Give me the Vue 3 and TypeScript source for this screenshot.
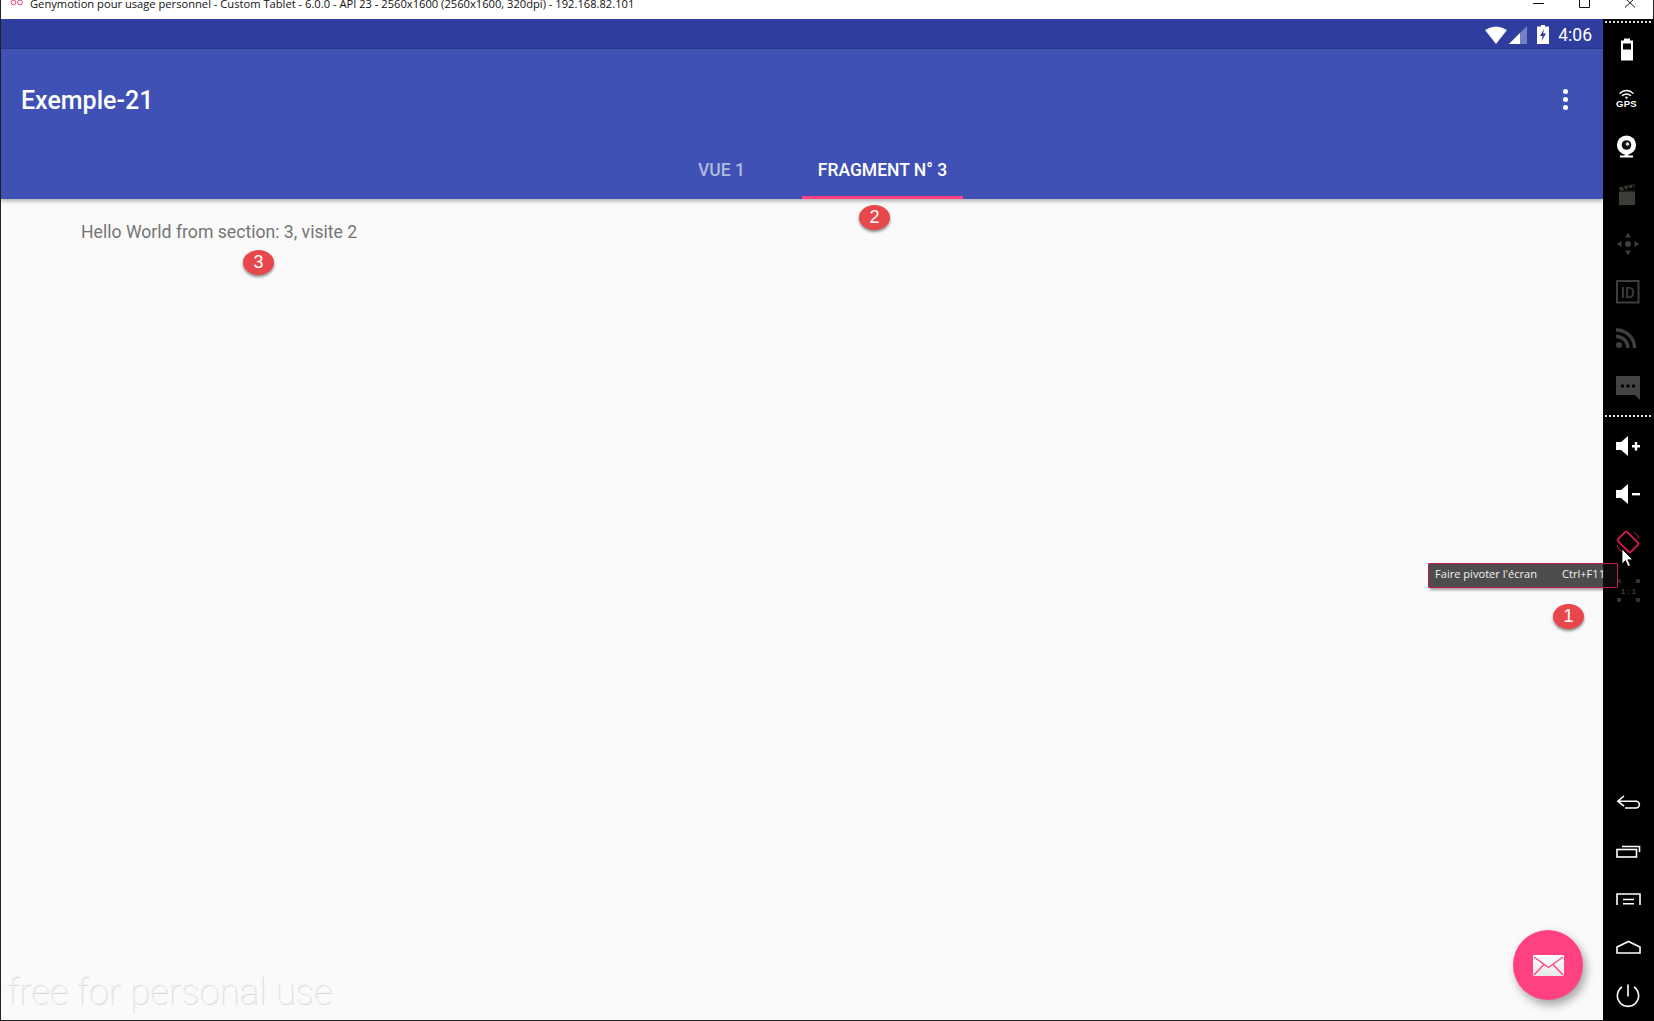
<script setup lang="ts">
interface Tab { label: string; active: boolean }
const tabs: Tab[] = [
  { label: 'VUE 1', active: false },
  { label: 'FRAGMENT N° 3', active: true },
]
</script>

<template>
  <div class="screen">
    <header class="titlebar">
      <svg class="logo" width="14" height="8" viewBox="0 0 14 8"><circle cx="3.5" cy="2.5" r="2.4" /><circle cx="10" cy="2.5" r="2.4" /></svg>
      <span class="window-title">Genymotion pour usage personnel - Custom Tablet - 6.0.0 - API 23 - 2560x1600 (2560x1600, 320dpi) - 192.168.82.101</span>
      <div class="window-buttons">
        <svg width="104" height="19" viewBox="0 0 104 19">
          <path d="M0 3.5H11" />
          <path d="M46.5 -2V7.5H56.5V-2" />
          <path d="M92 -2L102 7.5M102 -2L92 7.5" />
        </svg>
      </div>
    </header>

    <div class="body">
      <main class="device">
        <div class="statusbar">
          <svg width="22" height="18" viewBox="0 0 22 18"><path d="M0 4Q11 -3 22 4L11 18Z" fill="#fff" /></svg>
          <svg class="signal" width="18" height="18" viewBox="0 0 18 18"><path d="M0 18L18 0V18Z" fill="#fff" fill-opacity=".35" /><path d="M0 18L11 7V18Z" fill="#fff" /></svg>
          <svg class="battery" width="12" height="19" viewBox="0 0 12 19"><path d="M4 0H8V1.5H12V19H0V1.5H4Z" fill="#fff" /><path d="M7 4L3 11H5.6L4.6 16L9 8.6H6.2Z" fill="#2f3d9e" /></svg>
          <span class="clock">4:06</span>
        </div>
        <div class="appbar">
          <div class="toolbar">
            <h1 class="app-title">Exemple-21</h1>
            <div class="overflow"><i></i><i></i><i></i></div>
          </div>
          <nav class="tabs">
            <div v-for="tab in tabs" :key="tab.label" class="tab" :class="{ active: tab.active }">{{ tab.label }}</div>
          </nav>
        </div>
        <section class="content">
          <p class="hello">Hello World from section: 3, visite 2</p>
        </section>
      </main>

      <aside class="sidebar">
        <div class="dots first"></div>
        <svg class="slot" viewBox="0 1.5 48 48"><path d="M20 14H26V16H29V36H17V16H20Z" fill="#fff" /><rect x="19" y="19" width="8" height="6" fill="#000" /></svg>
        <svg class="slot" viewBox="0 1 48 48">
          <g fill="none" stroke="#fff" stroke-width="1.4"><path d="M15.5 20.5Q22.5 14.5 29.5 20.5" /><path d="M18 22.8Q22.5 19 27 22.8" /></g>
          <circle cx="22.5" cy="24.6" r="1.2" fill="#fff" />
          <text x="22.5" y="33.5" class="gps">GPS</text>
        </svg>
        <svg class="slot" viewBox="0 1 48 48">
          <circle cx="22.5" cy="24" r="9.6" fill="#fff" /><circle cx="22.5" cy="24" r="4.8" fill="#111" /><circle cx="23.5" cy="23" r="1.8" fill="#ddd" />
          <path d="M20.5 33H24.5V34.5H29V36.4H16V34.5H20.5Z" fill="#fff" />
        </svg>
        <svg class="slot" viewBox="0 0 48 48">
          <rect x="15" y="22" width="16" height="13" fill="#3d3d38" />
          <path d="M15 17.5L30 14L31 17L16 20.5Z" fill="#3d3d38" />
          <path d="M19 16.6L21 19.5M23.5 15.6L25.5 18.5M28 14.6L30 17.5" stroke="#000" stroke-width="1.3" />
          <rect x="15" y="20.5" width="16" height="1.2" fill="#2a2a26" />
        </svg>
        <svg class="slot" viewBox="0 0 48 48" fill="#3f3f3f">
          <circle cx="24" cy="26" r="3" />
          <path d="M24 15L27 19.5H21ZM24 37L21 32.5H27ZM13 26L17.5 23V29ZM35 26L30.5 29V23Z" />
        </svg>
        <svg class="slot" viewBox="0 0 48 48">
          <rect x="13" y="15" width="21.5" height="21.5" fill="none" stroke="#3e3e3e" stroke-width="2" />
          <text x="23.8" y="31.5" class="id">ID</text>
        </svg>
        <svg class="slot" viewBox="0 0 48 48" fill="none" stroke="#3f3f3f" stroke-width="3.4">
          <path d="M12 16A18 18 0 0 1 30.5 34" /><path d="M12 22.5A11.5 11.5 0 0 1 24 34" />
          <circle cx="15" cy="31" r="3" fill="#3f3f3f" stroke="none" />
        </svg>
        <svg class="slot" viewBox="0 0 48 48">
          <path d="M12 14H36V38L31 33H12Z" fill="#444" />
          <circle cx="18.5" cy="24" r="1.7" fill="#000" /><circle cx="24" cy="24" r="1.7" fill="#000" /><circle cx="29.5" cy="24" r="1.7" fill="#000" />
        </svg>
        <div class="dots"></div>
        <svg class="slot" viewBox="0 0 48 48" fill="#fff">
          <path d="M12 20H17L24 14V34L17 28H12Z" /><path d="M28 23H36V25.4H28ZM30.8 20H33.2V28.4H30.8Z" />
        </svg>
        <svg class="slot" viewBox="0 0 48 48" fill="#fff">
          <path d="M12 20H17L24 14V34L17 28H12Z" /><path d="M28 23H36V25.4H28Z" />
        </svg>
        <svg class="slot" viewBox="0 0 48 48" fill="none" stroke="#e3185c">
          <path d="M30 14A11.6 11.6 0 0 1 35 20.5M18 34A11.6 11.6 0 0 1 13 27.5" stroke-width=".9" />
          <rect x="17.5" y="15" width="13" height="18" rx="1.5" stroke-width="1.7" transform="rotate(-45 24 24)" />
        </svg>
        <svg class="slot" viewBox="0 0 48 48" fill="none" stroke="#3f3f3f" stroke-width="1.5">
          <path d="M14 14L17 17M14 17V14H17M35 14L32 17M35 17V14H32M14 35L17 32M14 32V35H17M35 35L32 32M35 32V35H32" />
          <text x="24.5" y="27.5" class="one">1 : 1</text>
        </svg>
        <div class="spacer"></div>
        <svg class="slot" viewBox="0 0 48 48" fill="none" stroke="#fff" stroke-width="1.6">
          <path d="M20 17L13.8 22.2L20 27.2M14 22.2H32A3.4 3.4 0 0 1 32 29H21" />
        </svg>
        <svg class="slot" viewBox="0 0 48 48" fill="none" stroke="#fff" stroke-width="1.6">
          <rect x="13" y="22.5" width="19.5" height="7.5" /><path d="M18 19.5H35.5V25" />
        </svg>
        <svg class="slot" viewBox="0 0 48 48" fill="none" stroke="#fff" stroke-width="1.6">
          <path d="M13 30V19H36V30M19 24.5H30M19 28.8H30" />
        </svg>
        <svg class="slot" viewBox="0 0 48 48" fill="none" stroke="#fff" stroke-width="1.6">
          <path d="M13 24L24.5 18.5L36 24V30H13Z" />
        </svg>
        <svg class="slot" viewBox="0 0 48 48" fill="none" stroke="#fff" stroke-width="1.6">
          <path d="M24 13.5V25.5M18 16A10.6 10.6 0 1 0 30 16" />
        </svg>
      </aside>
    </div>

    <div class="badge badge-one">1</div>
    <div class="badge badge-two">2</div>
    <div class="badge badge-three">3</div>

    <div class="tooltip"><span>Faire pivoter l'écran</span><span>Ctrl+F11</span></div>
    <svg class="cursor" width="13" height="20" viewBox="0 0 13 20"><path d="M1 1V16L4.4 12.6L7 18.5L9.4 17.4L6.9 11.8H11.8Z" fill="#fff" stroke="#000" stroke-width=".8" /></svg>

    <button class="fab" type="button" aria-label="mail">
      <svg width="31" height="21" viewBox="0 0 31 21">
        <defs><linearGradient id="mail" x1="0" y1="0" x2="0" y2="1"><stop offset="0" stop-color="#fff" /><stop offset="1" stop-color="#e8e8e8" /></linearGradient></defs>
        <rect width="31" height="21" rx="1" fill="url(#mail)" />
        <path d="M1 2L15.5 12.5L30 2M1 20L11 9.5M30 20L20 9.5" fill="none" stroke="#ff4081" stroke-width="1.3" />
      </svg>
    </button>

    <div class="watermark">free for personal use</div>
  </div>
</template>

<style>
html, body { margin: 0; background: #000; overflow: hidden; }
</style>

<style scoped>
.screen {
  position: relative;
  width: 1654px;
  height: 1021px;
  display: flex;
  flex-direction: column;
  overflow: hidden;
  background: #fff;
  font-family: Roboto, sans-serif;
}
.titlebar {
  flex: 0 0 19px;
  display: flex;
  align-items: flex-start;
  background: #fff;
  border-left: 1px solid #222;
  border-right: 1px solid #222;
  overflow: hidden;
  position: relative;
}
.logo { margin: 0 0 0 9px; fill: none; stroke: #e8447a; stroke-width: 1; }
.window-title {
  margin: -4px 0 0 6px;
  font: 11.17px/16px "Open Sans", sans-serif;
  color: #111;
  white-space: nowrap;
}
.window-buttons { margin-left: auto; margin-right: 16px; height: 19px; }
.window-buttons svg { display: block; fill: none; stroke: #111; stroke-width: 1; }
.body { flex: 1; display: flex; min-height: 0; }
.device {
  flex: 1;
  display: flex;
  flex-direction: column;
  min-width: 0;
  border-left: 1px solid #222;
  border-bottom: 1px solid #222;
}
.statusbar {
  flex: 0 0 30px;
  box-sizing: border-box;
  display: flex;
  align-items: center;
  justify-content: flex-end;
  padding: 1px 11px 0 0;
  background: #2f3d9e;
  box-shadow: inset 0 -1px 0 rgba(0, 0, 0, .08);
}
.signal { margin-left: 2px; }
.battery { margin-left: 10px; }
.clock { margin: 1px 0 0 9px; color: #fff; font-size: 17.5px; line-height: 24px; }
.appbar {
  flex: 0 0 150px;
  display: flex;
  flex-direction: column;
  background: #3f51b5;
  box-shadow: 0 2px 4px rgba(0, 0, 0, .32);
  position: relative;
}
.toolbar {
  flex: 0 0 103px;
  box-sizing: border-box;
  display: flex;
  align-items: center;
  justify-content: space-between;
  padding: 0 35px 0 20px;
}
.app-title { margin: 0; color: #fff; font-size: 25px; font-weight: 500; }
.overflow { display: flex; flex-direction: column; gap: 3px; margin-top: -3px; }
.overflow i { display: block; width: 5px; height: 5px; border-radius: 50%; background: #fff; }
.tabs { flex: 1; display: flex; justify-content: center; }
.tab {
  width: 161px;
  box-sizing: border-box;
  padding-top: 7px;
  text-align: center;
  font-size: 17.5px;
  line-height: 22px;
  font-weight: 500;
  color: rgba(255, 255, 255, .6);
  white-space: nowrap;
}
.tab.active { color: #fff; border-bottom: 3px solid #ff4081; }
.content { flex: 1; background: #fafafa; }
.hello {
  margin: 0;
  padding: 21px 0 0 80px;
  font-size: 17.64px;
  line-height: 24px;
  color: #757575;
}
.sidebar {
  flex: 0 0 51px;
  display: flex;
  flex-direction: column;
  background: #000;
  box-sizing: border-box;
  padding: 2px 0 2px 0;
}
.slot { display: block; flex: 0 0 48px; width: 48px; height: 48px; margin-left: 1px; }
.dots {
  flex: 0 0 2px;
  margin: 5px 2px;
  background: repeating-linear-gradient(90deg, #ddd 0 2px, transparent 2px 4px);
}
.dots.first { margin: 0 2px 3px; }
.spacer { flex: 1; }
.gps { font: 700 9.5px "Liberation Sans", sans-serif; fill: #fff; text-anchor: middle; letter-spacing: .3px; }
.id { font: 500 15px Roboto, sans-serif; fill: #3e3e3e; text-anchor: middle; }
.one { font: 700 7.5px "Liberation Sans", sans-serif; fill: #3f3f3f; stroke: none; text-anchor: middle; }

.badge {
  position: absolute;
  width: 31px;
  height: 25px;
  border-radius: 50%;
  background: #e8474c;
  box-shadow: 0 2px 3px rgba(0, 0, 0, .45);
  color: #fff;
  font: 18px/25px "Liberation Sans", sans-serif;
  text-align: center;
}
.badge-one { left: 1553px; top: 604px; }
.badge-two { left: 859px; top: 205px; }
.badge-three { left: 243px; top: 250px; }

.tooltip {
  position: absolute;
  left: 1428px;
  top: 563px;
  width: 190px;
  height: 25px;
  box-sizing: border-box;
  display: flex;
  justify-content: space-between;
  align-items: center;
  padding: 0 12px 5px 6px;
  border: 1px solid #c2185b;
  border-radius: 1px;
  background: linear-gradient(90deg, #4d4d4d 0 174px, #0c0c0c 174px);
  box-shadow: 2px 2px 3px rgba(0, 0, 0, .4);
  color: #f2f2f2;
  font: 11.1px "Open Sans", sans-serif;
  white-space: nowrap;
}
.cursor { position: absolute; left: 1621px; top: 548px; }
.fab {
  position: absolute;
  left: 1513px;
  top: 930px;
  width: 70px;
  height: 70px;
  padding: 0;
  border: 0;
  border-radius: 50%;
  background: #ff4081;
  box-shadow: 3px 5px 10px rgba(0, 0, 0, .35);
  display: flex;
  align-items: center;
  justify-content: center;
}
.watermark {
  position: absolute;
  left: 7px;
  top: 969px;
  font-family: Roboto, sans-serif;
  font-weight: 100;
  font-size: 36.8px;
  line-height: 46px;
  color: #f4f4f4;
  text-shadow: 1px 1px 0 #d8d8d8;
  white-space: nowrap;
}
</style>
